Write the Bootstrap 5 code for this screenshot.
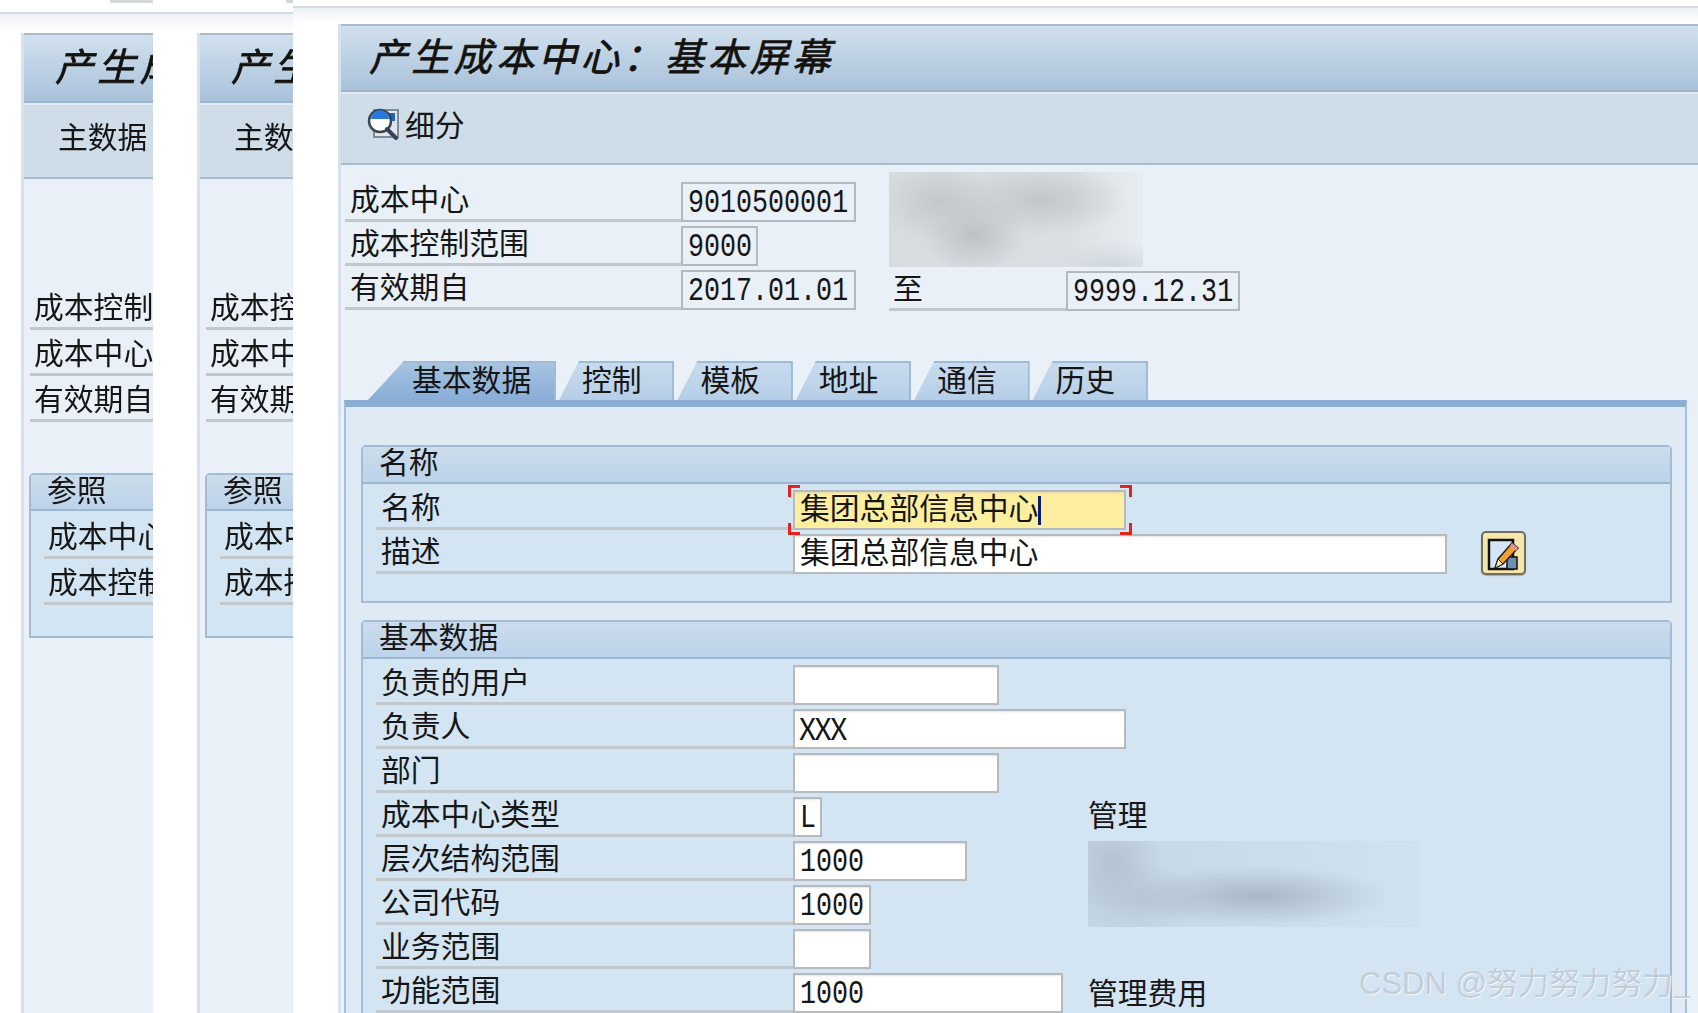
<!DOCTYPE html>
<html lang="zh-CN">
<head>
<meta charset="utf-8">
<title>产生成本中心：基本屏幕</title>
<link rel="stylesheet" href="https://cdn.jsdelivr.net/npm/bootstrap@5.3.0/dist/css/bootstrap.min.css">
<style>
html,body{background:#fff;margin:0;overflow:hidden}
.shot{width:1698px;height:1013px;overflow:hidden;font-family:"Noto Sans CJK SC","Liberation Sans",sans-serif;font-size:29.8px;color:#161616;line-height:36px;filter:blur(.45px);position:relative}
.pane{flex:none;height:1013px;overflow:hidden;position:relative}
.pane-a{width:153px}
.pane-b{width:140px}
.pane-c{width:1405px}
.top-rule{height:6px;border-bottom:2px solid #d4dae0;box-sizing:content-box}
.pane-a .top-rule,.pane-b .top-rule{height:12px}
.top-fade{height:19px;background:linear-gradient(#eef1f6,#fff)}
.pane-c .top-fade{height:16px}
.pane-a .win{margin-left:21px}
.pane-b .win{margin-left:44px}
.pane-c .win{margin-left:45px}
.stub{position:absolute;top:0;height:3px;background:#d3d6da}
.pane-a .stub{left:110px;width:43px}
.pane-b .stub{left:133px;width:7px}
.win{min-height:1000px;background:#e9f0f7;border-left:3px solid #d8e1ed}
.title-bar{height:68px;background:linear-gradient(#d1e0ed,#a9c2db);border-top:2px solid #a9bccf;border-bottom:2px solid #9db5cd;padding-left:28px;font-size:38.5px;letter-spacing:3.8px;font-style:italic;font-weight:400;-webkit-text-stroke:.7px #14120e;line-height:56px;white-space:nowrap;color:#14120e}
.pane-a .title-bar,.pane-b .title-bar{height:70px;line-height:58px;padding-left:31px}
.tool-bar{height:73px;background:#cfdde8;border-bottom:2px solid #a8bccf;border-top:2px solid #e4ecf3;padding-left:26px;white-space:nowrap}
.pane-a .tool-bar,.pane-b .tool-bar{height:76px;padding-left:34px;padding-top:12px}
.pane-c .tool-bar{padding-top:11px}
.crumb{gap:6px}
.crumb svg{margin-top:3px}
.head-left{width:516px;margin-top:13px;margin-left:4px}
.head-right{margin-left:28px;margin-top:7px;width:350px}
.line-row{height:44px;align-items:flex-end}
.line-lab{border-bottom:3px solid #c3c8cc;height:44px;padding-left:5px;line-height:39px;white-space:nowrap;flex:none}
.lab-337{width:336px}
.lab-177{width:177px;padding-left:4px}
.lab-417{width:417px}
.fld{display:block;flex:none;border:0;border-radius:0;padding:0 0 0 7px;height:40px;line-height:32px;background:#fff;box-shadow:inset 0 0 0 2px #b6babd,inset 0 4px 3px -2px #c6c6c6;white-space:nowrap;color:#161616;font-size:29.8px;min-height:0}
.fld-disp{background:#e9f0f7;box-shadow:inset 0 0 0 2px #b3b9be}
.w-175{width:175px}.w-77{width:77px}.w-332{width:333px}.w-654{width:654px}.w-205{width:206px}.w-29{width:29px}.w-173{width:174px}.w-77b{width:78px}.w-269{width:270px}
.mono{display:inline-block;font-family:"Liberation Mono",monospace;font-size:26.7px;transform:scaleY(1.22);transform-origin:50% 55%;line-height:33px}
.tight{letter-spacing:-1.5px;padding-left:6px;line-height:36px}
.blur-one{width:254px;height:95px;background:radial-gradient(ellipse 60px 40px at 50px 30px,#c2c7cb,transparent),radial-gradient(ellipse 90px 36px at 150px 28px,#c1c6ca,transparent),radial-gradient(ellipse 52px 40px at 85px 62px,#bcc1c5,transparent),radial-gradient(ellipse 60px 26px at 225px 95px,#cfd6dc,transparent),linear-gradient(90deg,#d7dcdf 0,#dadfe3 70%,#e8edf2 100%)}
.tab-strip{margin-top:50px;margin-left:3px;height:39px;padding-left:24px}
.sap-tab{height:39px;flex:none;border:0;background:linear-gradient(#cadcee,#b5cee6);color:#161616;line-height:34px;margin-right:3px;clip-path:polygon(0 100%,20px 0,100% 0,100% 100%);box-shadow:inset -2px 2px 0 #9fbbd7}
.tab-on{background:linear-gradient(#a9c5e1,#88add7);width:188px;padding-left:44px;clip-path:polygon(0 100%,36px 0,100% 0,100% 100%)}
.tab-off{width:115.4px;padding-left:23px}
.tab-panel{margin-left:3px;width:1343px;min-height:620px;background:#dfeaf4;border-top:7px solid #8aaed3;border-left:2px solid #a4c0dd;border-right:2px solid #a4c0dd;padding:38px 13px 0 15px}
.grp{background:#d3e4f3;border:2px solid #a2bcd8;border-radius:5px 5px 0 0;margin-bottom:17px;position:relative}
.grp-head{height:37px;background:linear-gradient(#cbdcec,#bcd3e9);border-bottom:2px solid #9db7d3;padding-left:16px;line-height:26px}
.grp-body{padding-left:13px;padding-top:2px}
.body-one{height:117px}
.note{position:absolute;left:725px;white-space:nowrap}
.note-a{top:173px}
.note-b{top:351px}
.blur-two{position:absolute;left:725px;top:219px;width:332px;height:86px;background:radial-gradient(ellipse 50px 50px at 25px 22px,#b3c2d0,transparent),radial-gradient(ellipse 130px 30px at 170px 55px,#a9b8c6,transparent),radial-gradient(ellipse 70px 36px at 50px 58px,#b8c8d6,transparent),linear-gradient(90deg,#c5d6e5 0,#d0e1f0 100%)}
.focus-wrap{position:relative;width:333px;height:40px;flex:none}
.focus-wrap .fld{background:#fdeea0;width:333px}
.caret-bar{display:inline-block;width:3px;height:29px;background:#0b1a70;vertical-align:-6px}
.tick{position:absolute;width:12px;height:12px;border:0 solid #e2231a}
.tk-tl{left:-5px;top:-5px;border-width:3px 0 0 3px}
.tk-tr{right:-6px;top:-5px;border-width:3px 3px 0 0}
.tk-bl{left:-5px;bottom:-5px;border-width:0 0 3px 3px}
.tk-br{right:-6px;bottom:-5px;border-width:0 3px 3px 0}
.edit-btn{position:absolute;left:1118px;top:84px;width:45px;height:44px;padding:0;background:#f6e6a8;border:2px solid #6e6e66;border-radius:5px;box-shadow:0 1px 1px #b3a980}
.edit-btn svg{display:block;margin:3px auto 0}
.mark-text{position:absolute;left:1359px;top:962px;font-size:31px;line-height:38px;color:#c3ced8;text-shadow:1px 1px 0 #f2f6f9;white-space:nowrap}
.mark-text b{font-family:"Liberation Sans",sans-serif;font-weight:400}
.ref-grp{margin-top:51px;margin-left:5px;width:400px;height:165px}
.ref-grp .grp-head{padding-left:16px;height:36px}
.side-spacer{height:105px}
.side-row{height:46px;margin-left:6px;width:300px}
.side-row .line-lab{height:46px;width:300px;padding-left:4px;line-height:42px}
.ref-grp .side-row{margin-left:13px;position:relative;top:2px}
</style>
</head>
<body>
<div class="shot d-flex">

  <section class="pane pane-a">
    <div class="stub"></div>
    <div class="top-rule"></div>
    <div class="top-fade"></div>
    <div class="win">
      <div class="title-bar">产生成本中心：基本屏幕</div>
      <div class="tool-bar">主数据</div>
      <div class="side-spacer"></div>
      <div class="side-row d-flex"><div class="line-lab">成本控制范围</div></div>
      <div class="side-row d-flex"><div class="line-lab">成本中心</div></div>
      <div class="side-row d-flex"><div class="line-lab">有效期自</div></div>
      <div class="grp ref-grp">
        <div class="grp-head">参照</div>
        <div class="side-row d-flex"><div class="line-lab">成本中心</div></div>
        <div class="side-row d-flex"><div class="line-lab">成本控制范围</div></div>
      </div>
    </div>
  </section>

  <section class="pane pane-b">
    <div class="stub"></div>
    <div class="top-rule"></div>
    <div class="top-fade"></div>
    <div class="win">
      <div class="title-bar">产生成本中心：基本屏幕</div>
      <div class="tool-bar">主数据</div>
      <div class="side-spacer"></div>
      <div class="side-row d-flex"><div class="line-lab">成本控制范围</div></div>
      <div class="side-row d-flex"><div class="line-lab">成本中心</div></div>
      <div class="side-row d-flex"><div class="line-lab">有效期自</div></div>
      <div class="grp ref-grp">
        <div class="grp-head">参照</div>
        <div class="side-row d-flex"><div class="line-lab">成本中心</div></div>
        <div class="side-row d-flex"><div class="line-lab">成本控制范围</div></div>
      </div>
    </div>
  </section>

  <section class="pane pane-c">
    <div class="top-rule"></div>
    <div class="top-fade"></div>
    <div class="win">
      <div class="title-bar">产生成本中心：基本屏幕</div>
      <div class="tool-bar d-flex align-items-start crumb">
        <svg width="32" height="32" viewBox="0 0 32 32" aria-hidden="true">
          <rect x="7" y="2" width="24" height="27" fill="#dfe6ec" stroke="#7f8a94" stroke-width="2"/>
          <rect x="14" y="5" width="14" height="8" fill="#1c62c8"/>
          <circle cx="13" cy="13" r="11" fill="#fff" stroke="#394650" stroke-width="2.5"/>
          <path d="M4 11a9 9 0 0 1 18 0z" fill="#2a78dd"/>
          <path d="M20 21l9 9" stroke="#3b3f5e" stroke-width="4" stroke-linecap="round"/>
        </svg>
        <span>细分</span>
      </div>

      <div class="d-flex">
        <div class="head-left">
          <div class="line-row d-flex"><div class="line-lab lab-337">成本中心</div><div class="fld fld-disp w-175"><span class="mono">9010500001</span></div></div>
          <div class="line-row d-flex"><div class="line-lab lab-337">成本控制范围</div><div class="fld fld-disp w-77"><span class="mono">9000</span></div></div>
          <div class="line-row d-flex"><div class="line-lab lab-337">有效期自</div><div class="fld fld-disp w-175"><span class="mono">2017.01.01</span></div></div>
        </div>
        <div class="head-right">
          <div class="blur-one"></div>
          <div class="line-row d-flex"><div class="line-lab lab-177">至</div><div class="fld fld-disp w-173"><span class="mono">9999.12.31</span></div></div>
        </div>
      </div>

      <div class="tab-strip d-flex">
        <div class="sap-tab tab-on">基本数据</div>
        <div class="sap-tab tab-off">控制</div>
        <div class="sap-tab tab-off">模板</div>
        <div class="sap-tab tab-off">地址</div>
        <div class="sap-tab tab-off">通信</div>
        <div class="sap-tab tab-off">历史</div>
      </div>

      <div class="tab-panel">
        <div class="grp">
          <div class="grp-head">名称</div>
          <div class="grp-body body-one">
            <div class="line-row d-flex"><div class="line-lab lab-417">名称</div>
              <div class="focus-wrap"><div class="fld">集团总部信息中心<span class="caret-bar"></span></div><i class="tick tk-tl"></i><i class="tick tk-tr"></i><i class="tick tk-bl"></i><i class="tick tk-br"></i></div>
            </div>
            <div class="line-row d-flex"><div class="line-lab lab-417">描述</div><div class="fld w-654">集团总部信息中心</div></div>
          </div>
          <button type="button" class="edit-btn" aria-label="编辑">
            <svg width="36" height="36" viewBox="0 0 36 36" aria-hidden="true">
              <rect x="3" y="3" width="24" height="29" fill="#d4e6f5" stroke="#111" stroke-width="2.5"/>
              <rect x="21" y="20" width="10" height="12" fill="#6d8fb3" stroke="#111" stroke-width="1.5"/>
              <path d="M9 31l3-9L26 6l6 5-15 16z" fill="#f2a02c" stroke="#222" stroke-width="1.5"/>
              <path d="M26 6l6 5-2 3-6-5z" fill="#e9929b"/>
              <path d="M9 31l3-9 5 5z" fill="#f5ecc4" stroke="#222" stroke-width="1"/>
            </svg>
          </button>
        </div>
        <div class="grp">
          <div class="grp-head">基本数据</div>
          <div class="grp-body">
            <div class="line-row d-flex"><div class="line-lab lab-417">负责的用户</div><div class="fld w-205"></div></div>
            <div class="line-row d-flex"><div class="line-lab lab-417">负责人</div><div class="fld w-332 tight">XXX</div></div>
            <div class="line-row d-flex"><div class="line-lab lab-417">部门</div><div class="fld w-205"></div></div>
            <div class="line-row d-flex"><div class="line-lab lab-417">成本中心类型</div><div class="fld w-29"><span class="mono">L</span></div></div>
            <div class="line-row d-flex"><div class="line-lab lab-417">层次结构范围</div><div class="fld w-173"><span class="mono">1000</span></div></div>
            <div class="line-row d-flex"><div class="line-lab lab-417">公司代码</div><div class="fld w-77b"><span class="mono">1000</span></div></div>
            <div class="line-row d-flex"><div class="line-lab lab-417">业务范围</div><div class="fld w-77b"></div></div>
            <div class="line-row d-flex"><div class="line-lab lab-417">功能范围</div><div class="fld w-269"><span class="mono">1000</span></div></div>
          </div>
          <div class="note note-a">管理</div>
          <div class="blur-two"></div>
          <div class="note note-b">管理费用</div>
        </div>
      </div>
    </div>
  </section>

  <div class="mark-text"><b>CSDN @</b>努力努力努力_</div>
</div>
<script src="https://cdn.jsdelivr.net/npm/bootstrap@5.3.0/dist/js/bootstrap.bundle.min.js"></script>
</body>
</html>
